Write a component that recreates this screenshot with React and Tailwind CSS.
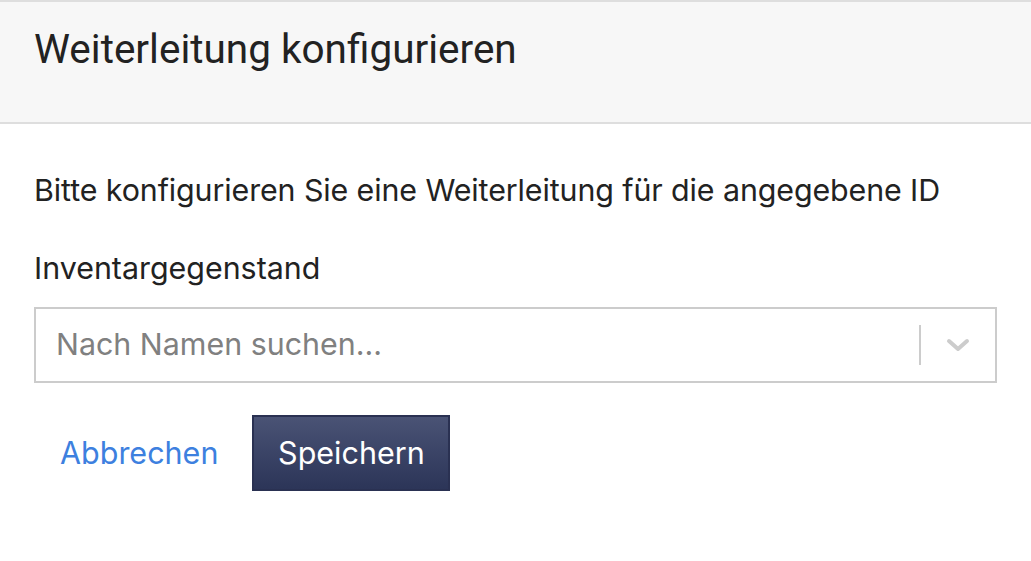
import React from 'react';

export default function App() {
    return (
        <div className="w-[1031px] h-[561px] bg-white overflow-hidden" style={{ fontFamily: 'Inter, "Noto Sans", sans-serif' }}>
            {/* Header */}
            <div className="border-t-2 border-b-2 border-[#dedede] bg-[#f7f7f7] h-[124px] px-[34px] pt-[23px]">
                <h1 className="text-[40.5px] leading-[48px] text-[#222] font-normal" style={{ fontFamily: 'Roboto, sans-serif' }}>
                    Weiterleitung konfigurieren
                </h1>
            </div>

            {/* Body */}
            <div className="px-[34px] pt-[48px]">
                <p className="text-[30.4px] leading-[36px] text-[#222] tracking-[-0.1px]">
                    Bitte konfigurieren Sie eine Weiterleitung für die angegebene ID
                </p>
                <label className="block mt-[42px] text-[30.4px] leading-[36px] text-[#222]">Inventargegenstand</label>
                <div className="mt-[21px] h-[76px] border-2 border-[#cccccc] flex items-center">
                    <span className="flex-1 pl-[20px] text-[30.4px] text-[#808080]">Nach Namen suchen...</span>
                    <span className="w-[2px] h-[40px] bg-[#cccccc]" />
                    <span className="w-[74px] flex justify-center">
                        <svg width="26" height="16" viewBox="0 0 26 16" fill="none">
                            <path d="M4 4 L13 12 L22 4" stroke="#cccccc" strokeWidth="4" strokeLinecap="round" strokeLinejoin="round" />
                        </svg>
                    </span>
                </div>
                <div className="mt-[32px] flex items-center gap-[34px]">
                    <button className="pl-[26px] text-[30.5px] text-[#3d80df]">Abbrechen</button>
                    <button className="h-[76px] w-[198px] text-[30.5px] text-white border-2 border-[#2a3152] bg-gradient-to-b from-[#4a5375] to-[#2c3558]">
                        Speichern
                    </button>
                </div>
            </div>
        </div>
    );
}
